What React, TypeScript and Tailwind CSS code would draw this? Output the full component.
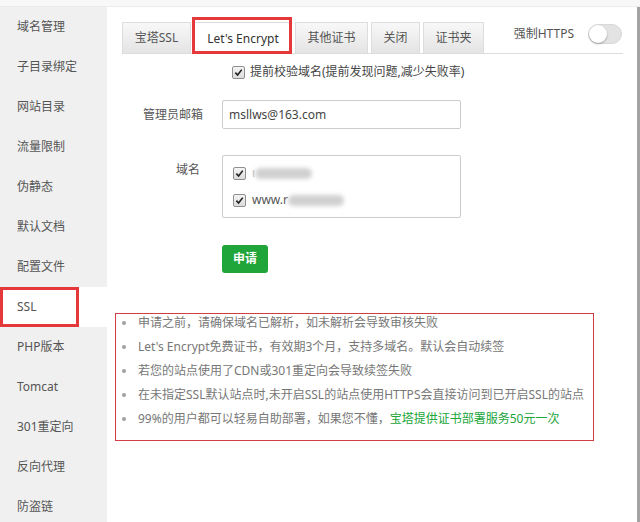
import React from "react";

const menu = [
  "域名管理",
  "子目录绑定",
  "网站目录",
  "流量限制",
  "伪静态",
  "默认文档",
  "配置文件",
  "SSL",
  "PHP版本",
  "Tomcat",
  "301重定向",
  "反向代理",
  "防盗链",
];

const tabs = [
  { label: "宝塔SSL", w: "w-[69px]" },
  { label: "Let's Encrypt", w: "w-[98px]", active: true },
  { label: "其他证书", w: "w-[73px]" },
  { label: "关闭", w: "w-[49px]" },
  { label: "证书夹", w: "w-[61px]" },
];

const tips = [
  "申请之前，请确保域名已解析，如未解析会导致审核失败",
  "Let's Encrypt免费证书，有效期3个月，支持多域名。默认会自动续签",
  "若您的站点使用了CDN或301重定向会导致续签失败",
  "在未指定SSL默认站点时,未开启SSL的站点使用HTTPS会直接访问到已开启SSL的站点",
];

function Check() {
  return (
    <span className="grid h-[13px] w-[13px] shrink-0 place-items-center rounded-[2px] border border-[#8f8f8f] bg-gradient-to-b from-[#f4f4f4] to-[#dcdcdc]">
      <svg viewBox="0 0 10 10" className="h-[9px] w-[9px]">
        <path d="M1.5 5.2 L4 7.8 L8.6 1.8" fill="none" stroke="#222" strokeWidth="1.8" />
      </svg>
    </span>
  );
}

function Smudge({ w }: { w: string }) {
  return <span className={`inline-block h-[11px] ${w} rounded-full bg-[#d0d0d0] blur-[2px]`} />;
}

export default function App() {
  return (
    <div
      className="relative flex h-[522px] w-[640px] flex-col overflow-hidden bg-white text-[12px] text-[#555]"
      style={{ fontFamily: '"Noto Sans", "Noto Sans CJK SC", sans-serif' }}
    >
      <div className="h-[7px] shrink-0 border-b border-[#ececec] bg-[#f8f8f8]" />
      <div className="flex min-h-0 flex-1 overflow-hidden">
        <aside className="w-[107px] shrink-0 bg-[#f0f0f0]">
          {menu.map((m) => (
            <div
              key={m}
              className={`flex h-[40px] items-center pl-[17px] ${m === "SSL" ? "bg-white" : ""}`}
            >
              {m}
            </div>
          ))}
        </aside>

        <main className="flex-1 pl-[15px] pr-[14px] pt-[15px]">
          <div className="flex items-start border-b border-[#dddddd]">
            <div className="flex gap-[3px]">
              {tabs.map((t) => (
                <div
                  key={t.label}
                  className={`flex ${t.w} items-center justify-center border border-b-0 border-[#dddddd] ${
                    t.active
                      ? "-mb-px h-[32px] bg-white text-[#333]"
                      : "h-[31px] bg-gradient-to-b from-[#f8f8f8] to-[#e4e4e4]"
                  }`}
                >
                  {t.label}
                </div>
              ))}
            </div>
            <div className="ml-auto mr-[1px] mt-[2px] flex h-[20px] items-center gap-[14px]">
              <span>强制HTTPS</span>
              <span className="flex h-[20px] w-[34px] items-center rounded-full border border-[#d8d8d8] bg-[#e3e3e3]">
                <span className="h-[18px] w-[18px] rounded-full bg-white shadow-[0_1px_2px_rgba(0,0,0,0.3)]" />
              </span>
            </div>
          </div>

          <div className="ml-[110px] mt-[9px] flex h-[18px] items-center gap-[5px] text-[#444]">
            <Check />
            <span>提前校验域名(提前发现问题,减少失败率)</span>
          </div>

          <div className="mt-[19px] flex h-[29px] items-center">
            <label className="w-[100px] pr-[19px] text-right">管理员邮箱</label>
            <div className="flex h-[29px] w-[239px] items-center rounded-[2px] border border-[#cccccc] px-[6px] text-[12px] text-[#444]">
              msllws@163.com
            </div>
          </div>

          <div className="mt-[26px] flex">
            <label className="w-[100px] pr-[22px] pt-[8px] text-right leading-[14px]">域名</label>
            <div className="flex h-[63px] w-[239px] flex-col gap-[9px] rounded-[2px] border border-[#cccccc] pl-[10px] pt-[8px] text-[12px] text-[#555]">
              <div className="flex h-[18px] items-center gap-[6px]">
                <Check />
                <span className="flex items-center">
                  <span className="text-[#bbb]">ı</span>
                  <Smudge w="w-[57px]" />
                </span>
              </div>
              <div className="flex h-[18px] items-center gap-[6px]">
                <Check />
                <span className="flex items-center">
                  www.r
                  <Smudge w="w-[56px]" />
                </span>
              </div>
            </div>
          </div>

          <button className="ml-[100px] mt-[27px] flex h-[28px] w-[46px] items-center justify-center rounded-[3px] bg-[#20a53a] font-bold text-white">
            申请
          </button>

          <div className="-ml-[7px] mt-[40px] w-[479px] border border-[#d23c43] pb-[9px]">
            <ul className="-mt-[3px] text-[#777]">
              {tips.map((t) => (
                <li key={t} className="flex h-[24px] items-center whitespace-nowrap">
                  <span className="ml-[6px] mr-[12px] h-[4px] w-[4px] shrink-0 rounded-full bg-[#a0a0a0]" />
                  {t}
                </li>
              ))}
              <li className="flex h-[24px] items-center whitespace-nowrap">
                <span className="ml-[6px] mr-[12px] h-[4px] w-[4px] shrink-0 rounded-full bg-[#a0a0a0]" />
                99%的用户都可以轻易自助部署，如果您不懂，
                <span className="text-[#20a53a]">宝塔提供证书部署服务50元一次</span>
              </li>
            </ul>
          </div>
        </main>

        <div className="w-[3px] shrink-0 bg-[#a3a3a3]" />
      </div>

      <div className="pointer-events-none absolute left-[192px] top-[17px] h-[37px] w-[100px] border-[3px] border-[#e5383b]" />
      <div className="pointer-events-none absolute left-0 top-[287px] h-[40px] w-[79px] border-[3px] border-[#e5383b]" />
    </div>
  );
}
